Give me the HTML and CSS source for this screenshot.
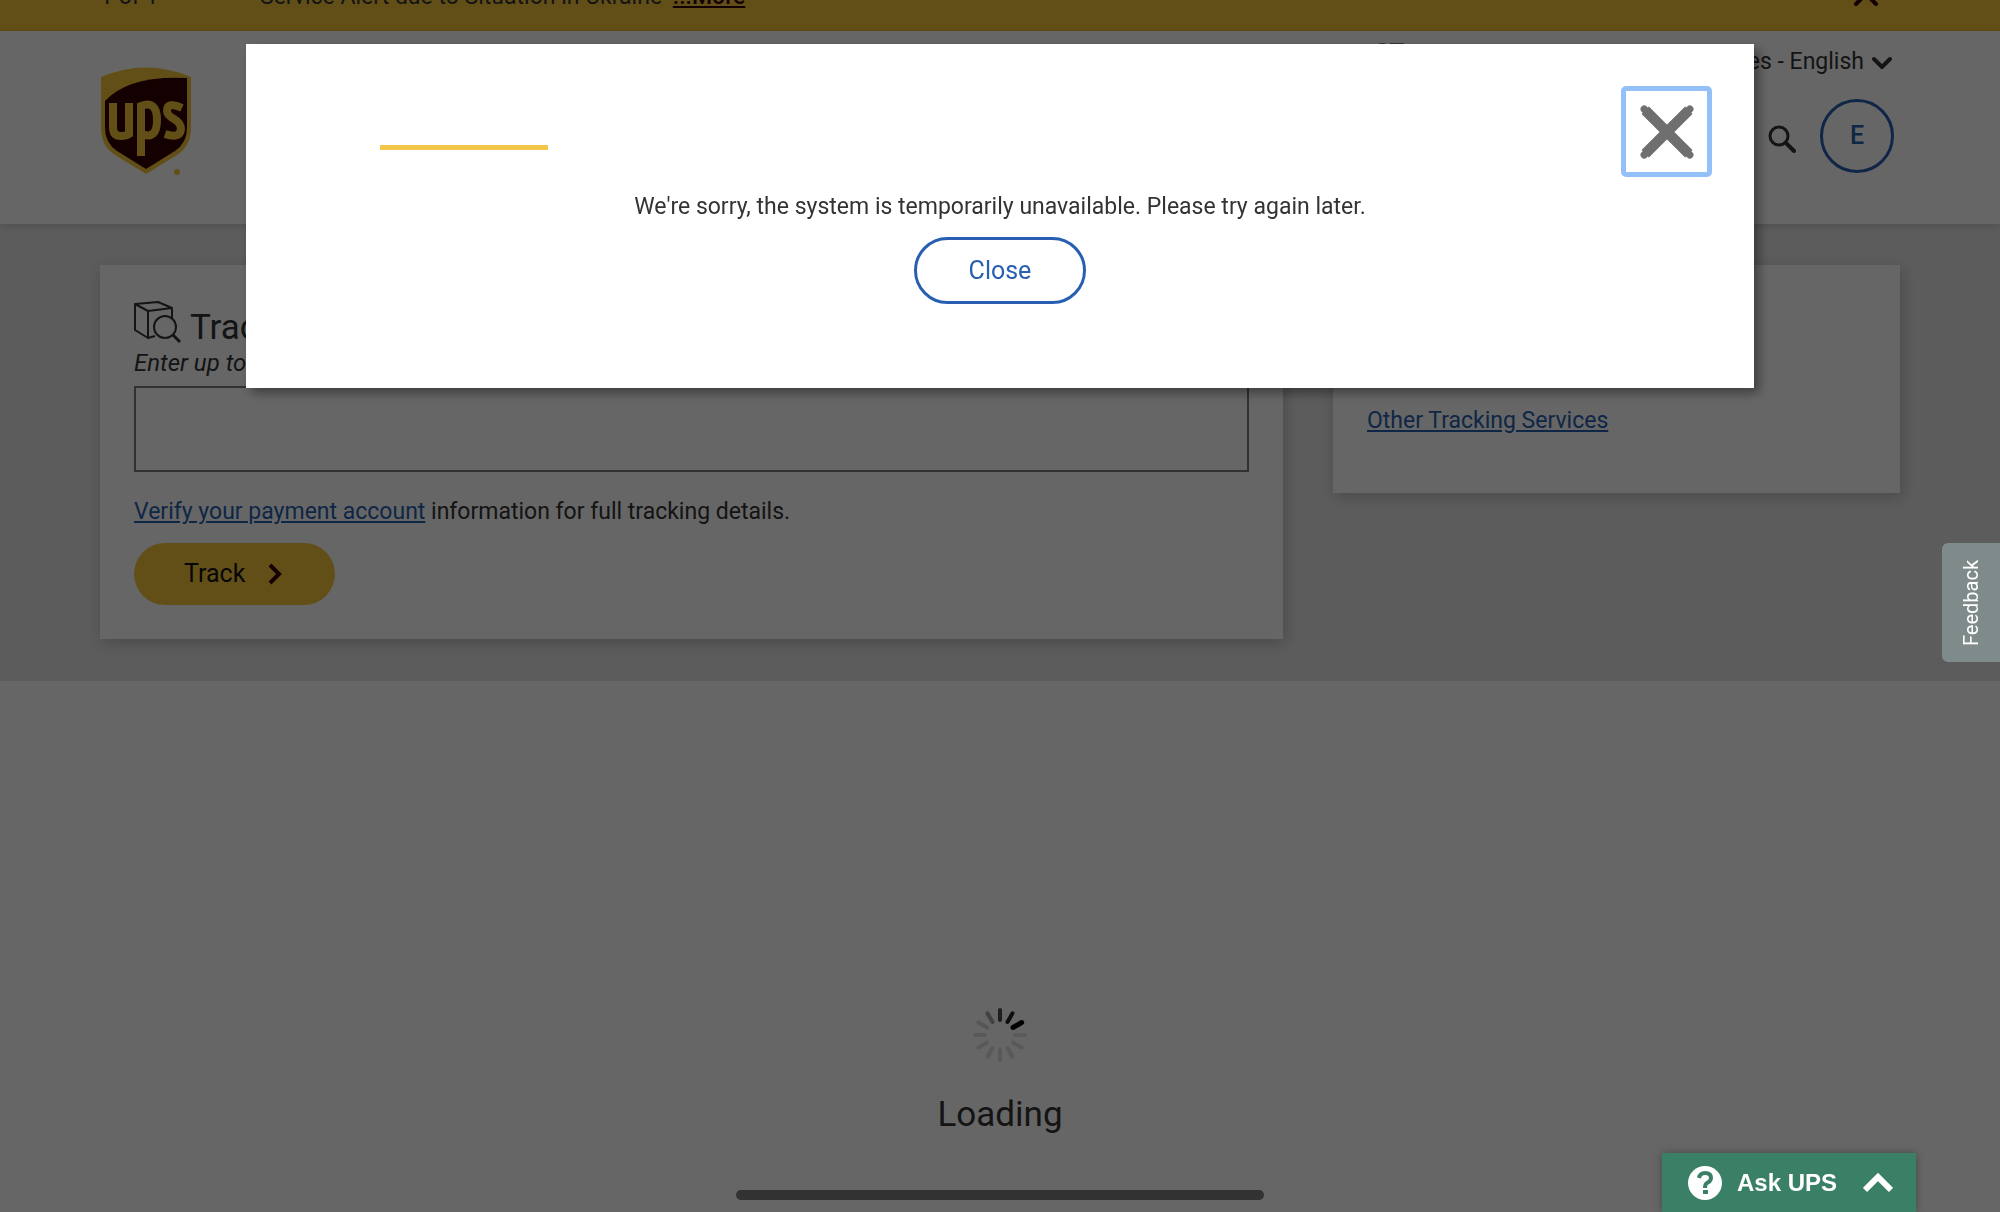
FILE: index.html
```html
<!DOCTYPE html>
<html lang="en">
<head>
  <meta charset="UTF-8" />
  <meta name="viewport" content="width=device-width, initial-scale=1.0"/>
  <title>Tracking | UPS - United States</title>
  <link rel="stylesheet" href="styles.css">
</head>
<body>

<div class="alert-bar">
  <span class="alert-count">1 of 1</span>
  <p class="alert-text">Service Alert due to Situation in Ukraine <a href="#">...More</a></p>
  <button type="button" class="alert-close" aria-label="Dismiss alert">
    <svg width="26" height="26" viewBox="0 0 26 26"><path d="M3 3l20 20M23 3L3 23" stroke="#330000" stroke-width="4" stroke-linecap="round"/></svg>
  </button>
</div>

<header class="header">
  <a href="#" class="logo" aria-label="UPS home">
    <svg width="92" height="108" viewBox="0 0 92 108">
      <path d="M1 10Q46-9 91 10V61Q91 79 77 88L46 107L15 88Q1 79 1 61Z" fill="#f5c53a"/>
      <path d="M5 34Q29 8 87 11V61Q87 76 75 84L46 102L17 84Q5 76 5 61Z" fill="#330000"/>
      <g fill="none" stroke="#f5c53a" stroke-width="8">
        <path d="M13 36V60Q13 69 21 69Q26 69 29 67V36"/>
        <path d="M41 89V39Q57 33 57 53Q57 73 42 67"/>
        <path d="M82 41Q67 34 67 44Q67 48 74 52Q81 56 81 62Q80 72 65 67"/>
      </g>
      <circle cx="77" cy="105" r="3" fill="#f5c53a"/>
    </svg>
  </a>
  <div class="header-right">
    <div class="header-top">
      <svg class="top-icon" width="28" height="28" viewBox="0 0 28 28"><path d="M1 2h6M12 2h14M4 2v20M12 2v20h14V2" fill="none" stroke="#121212" stroke-width="3"/></svg>
      <button type="button" class="language">United States - English
        <svg width="20" height="14" viewBox="0 0 20 14"><path d="M2 4l8 8 8-8" fill="none" stroke="#333" stroke-width="4" stroke-linecap="round"/></svg>
      </button>
    </div>
    <div class="header-tools">
      <button type="button" class="search" aria-label="Search">
        <svg width="28" height="28" viewBox="0 0 28 28"><circle cx="11" cy="11" r="9" fill="none" stroke="#333" stroke-width="3"/><path d="M18 18l8 8" stroke="#333" stroke-width="4" stroke-linecap="round"/></svg>
      </button>
      <button type="button" class="avatar">E</button>
    </div>
  </div>
</header>

<main>
  <section class="tracking">
    <form class="card">
      <h1>
        <svg width="48" height="42" viewBox="0 0 48 42" fill="none" stroke="#333" stroke-width="2" stroke-linejoin="round"><path d="M21 35L14 37L1 29V3L24 1L38 7V17M1 3L14 10V37M14 10L38 7"/><circle cx="31" cy="26" r="11"/><path d="M39 34l7 7" stroke-width="3"/></svg>
        Track
      </h1>
      <label class="hint" for="numbers">Enter up to 25 tracking numbers, one per line.</label>
      <textarea id="numbers" name="numbers"></textarea>
      <p class="verify"><a href="#">Verify your payment account</a> information for full tracking details.</p>
      <button type="submit" class="track-btn">Track
        <svg width="16" height="24" viewBox="0 0 16 24"><path d="M3 3l9 9-9 9" fill="none" stroke="#330000" stroke-width="4"/></svg>
      </button>
    </form>
    <aside class="card services">
      <h2>Other Services</h2>
      <a href="#">Other Tracking Services</a>
    </aside>
  </section>

  <div class="loading">
    <svg width="54" height="54" viewBox="-27 -27 54 54" stroke="#000" stroke-width="4" stroke-linecap="round">
      <path d="M0-15V-25" opacity=".7"/>
      <path d="M0-15V-25" transform="rotate(30)" opacity=".85"/>
      <path d="M0-15V-25" transform="rotate(60)" stroke-width="5"/>
      <path d="M0-15V-25" transform="rotate(90)" opacity=".1"/>
      <path d="M0-15V-25" transform="rotate(120)" opacity=".12"/>
      <path d="M0-15V-25" transform="rotate(150)" opacity=".12"/>
      <path d="M0-15V-25" transform="rotate(180)" opacity=".12"/>
      <path d="M0-15V-25" transform="rotate(210)" opacity=".12"/>
      <path d="M0-15V-25" transform="rotate(240)" opacity=".12"/>
      <path d="M0-15V-25" transform="rotate(270)" opacity=".12"/>
      <path d="M0-15V-25" transform="rotate(300)" opacity=".15"/>
      <path d="M0-15V-25" transform="rotate(330)" opacity=".35"/>
    </svg>
    <p>Loading</p>
  </div>
</main>

<div class="overlay">
  <div class="modal" role="dialog" aria-modal="true">
    <div class="modal-head">
      <span class="modal-rule"></span>
      <button type="button" class="modal-x" aria-label="Close dialog">
        <svg width="56" height="56" viewBox="0 0 54 54"><path d="M6 6l42 42M48 6L6 48" stroke="#6f6f6f" stroke-width="10"/><path d="M5 5l44 44M49 5L5 49" stroke="#6f6f6f" stroke-width="7" stroke-linecap="round"/></svg>
      </button>
    </div>
    <p>We're sorry, the system is temporarily unavailable. Please try again later.</p>
    <button type="button" class="modal-close">Close</button>
  </div>
</div>

<button type="button" class="feedback">Feedback</button>

<button type="button" class="ask">
  <svg width="34" height="34" viewBox="0 0 34 34"><circle cx="17" cy="17" r="17" fill="#fff"/><path d="M11 12Q12 7 17 7Q23 7 23 12Q23 15 19 17Q17 18 17 22" fill="none" stroke="#3a8066" stroke-width="4"/><path d="M15 24h5v4h-5z" fill="#3a8066"/></svg>
  <span>Ask UPS</span>
  <svg class="up" width="30" height="20" viewBox="0 0 30 20"><path d="M2 17L15 4l13 13" fill="none" stroke="#fff" stroke-width="6"/></svg>
</button>

<div class="home-bar"></div>

</body>
</html>
```

FILE: styles.css
```css
* { box-sizing: border-box; }
body {
  margin: 0; min-height: 100vh; background: #fff; color: #333; overflow: hidden;
  font-family: Roboto, Arial, sans-serif; font-size: 24px; line-height: 36px;
}
p, h1, h2 { margin: 0; font-weight: 400; }
button { font: inherit; color: inherit; border: none; background: none; padding: 0; cursor: pointer; }
svg { display: block; flex: none; }
a { color: #285fb0; }

.alert-bar {
  display: flex; align-items: flex-end; height: 31px; padding: 0 121px 16px 100px;
  background: #f5c53a; overflow: hidden; font-size: 23px;
}
.alert-count { width: 160px; }
.alert-text { flex: 1; }
.alert-text a { color: #330000; font-weight: 500; margin-left: 5px; }
.alert-close { padding-bottom: 8px; }

.header {
  display: flex; justify-content: space-between; height: 193px; padding: 0 5%;
  position: relative; box-shadow: 0 2px 8px rgba(0, 0, 0, .15);
}
.logo { padding-top: 36px; }
.header-top { display: flex; justify-content: flex-end; gap: 229px; padding: 13px 8px 0 0; }
.top-icon { margin-top: -1px; }
.language { display: flex; align-items: center; gap: 8px; font-size: 23px; }
.header-tools { display: flex; justify-content: flex-end; align-items: center; gap: 24px; padding: 19px 6px 0 0; }
.search { padding-top: 6px; }
.avatar {
  width: 74px; height: 74px; border: 3px solid #285fb0; border-radius: 50%;
  color: #285fb0; font-size: 25px; font-weight: 500;
}

.tracking {
  display: grid; grid-template-columns: 1183fr 567fr; gap: 50px; align-items: start;
  padding: 41px 5% 42px; background: #e6e6e6;
}
.card { padding: 34px; background: #fff; box-shadow: 2px 4px 14px rgba(0, 0, 0, .2); }
.card h1 { display: flex; gap: 8px; height: 49px; padding-top: 2px; font-size: 35px; line-height: 54px; }
.hint { display: block; font-style: italic; line-height: 30px; }
textarea {
  display: block; width: 100%; height: 86px; margin: 8px 0 22px; resize: none;
  border: 2px solid #7a7a7a; background: #fff; font: inherit;
}
.verify, .services a, .modal p { font-size: 23px; }
.track-btn {
  display: flex; align-items: center; gap: 22px; height: 62px; margin-top: 13px;
  padding: 0 52px 0 50px; border-radius: 31px; background: #f5c53a; color: #121212; font-size: 25px;
}
.services { height: 228px; }
.services h2 { font-size: 35px; line-height: 54px; margin-bottom: 49px; }

.loading { display: flex; flex-direction: column; align-items: center; gap: 26px; padding-top: 327px; }
.loading p { font-size: 35px; line-height: 54px; }

.overlay { position: fixed; inset: 0; padding-top: 44px; background: rgba(0, 0, 0, .6); }
.modal {
  display: flex; flex-direction: column; align-items: center; width: 75.4%; height: 344px;
  margin: 0 auto; background: #fff; box-shadow: 5px 5px 10px rgba(0, 0, 0, .4);
}
.modal-head {
  display: flex; justify-content: space-between; align-items: center; align-self: stretch;
  padding: 42px 42px 0 134px; margin-bottom: 12px;
}
.modal-rule { width: 168px; height: 5px; margin-top: 32px; background: #f2c649; }
.modal-x {
  display: grid; place-items: center; width: 91px; height: 91px;
  border: 5px solid #94c0fa; border-radius: 5px;
}
.modal-close {
  width: 172px; height: 67px; margin-top: 12px; border: 3px solid #285fb0; border-radius: 34px;
  color: #285fb0; font-size: 25px;
}

.feedback {
  position: fixed; right: 0; top: 543px; width: 58px; height: 119px;
  display: flex; align-items: center; justify-content: center;
  border-radius: 0 6px 6px 0; background: #7f8b8b; color: #fff; font-size: 20px;
  writing-mode: vertical-rl; transform: rotate(180deg);
}
.ask {
  position: fixed; right: 84px; bottom: 0; display: flex; align-items: center; gap: 15px;
  width: 254px; height: 59px; padding: 0 23px 0 26px;
  background: #3a8066; color: #fff; box-shadow: 0 0 8px rgba(0, 0, 0, .3);
  font-family: "Liberation Sans", Arial, sans-serif; font-weight: 700;
}
.ask .up { margin-left: auto; }
.home-bar {
  position: fixed; bottom: 12px; left: 50%; width: 528px; height: 10px; margin-left: -264px;
  border-radius: 5px; background: #323232;
}
```
